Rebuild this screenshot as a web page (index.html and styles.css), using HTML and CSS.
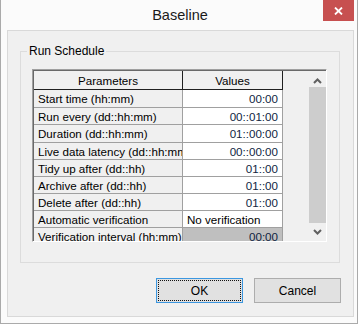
FILE: index.html
```html
<!DOCTYPE html>
<html lang="en">
<head>
    <meta charset="UTF-8">
    <title>Baseline</title>
    <link rel="stylesheet" href="styles.css">
</head>
<body>

    <div class="window">
        <!-- Title bar -->
        <div class="titlebar">
            <span></span>
            <span class="title">Baseline</span>
            <button class="close-btn" title="Close">
                <svg width="9" height="8" viewBox="0 0 9 8">
                    <path d="M1 0.5 L8 7.5 M8 0.5 L1 7.5" stroke="#fff" stroke-width="1.8" fill="none"/>
                </svg>
            </button>
        </div>

        <div class="panel">
            <div class="group">
                <span class="group-title">Run Schedule</span>

                <div class="grid">
                    <div class="table">
                        <div class="row head">
                            <div class="cell name">Parameters</div>
                            <div class="cell value">Values</div>
                        </div>
                        <div class="row">
                            <div class="cell name">Start time (hh:mm)</div>
                            <div class="cell value">00:00</div>
                        </div>
                        <div class="row">
                            <div class="cell name">Run every (dd::hh:mm)</div>
                            <div class="cell value">00::01:00</div>
                        </div>
                        <div class="row">
                            <div class="cell name">Duration (dd::hh:mm)</div>
                            <div class="cell value">01::00:00</div>
                        </div>
                        <div class="row">
                            <div class="cell name">Live data latency (dd::hh:mm)</div>
                            <div class="cell value">00::00:00</div>
                        </div>
                        <div class="row">
                            <div class="cell name">Tidy up after (dd::hh)</div>
                            <div class="cell value">01::00</div>
                        </div>
                        <div class="row">
                            <div class="cell name">Archive after (dd::hh)</div>
                            <div class="cell value">01::00</div>
                        </div>
                        <div class="row">
                            <div class="cell name">Delete after (dd::hh)</div>
                            <div class="cell value">01::00</div>
                        </div>
                        <div class="row">
                            <div class="cell name">Automatic verification</div>
                            <div class="cell value text">No verification</div>
                        </div>
                        <div class="row">
                            <div class="cell name">Verification interval (hh:mm)</div>
                            <div class="cell value disabled">00:00</div>
                        </div>
                    </div>

                    <!-- Vertical scrollbar -->
                    <div class="scrollbar">
                        <div class="arrow up">
                            <svg width="9" height="6" viewBox="0 0 9 6">
                                <path d="M1 5 L4.5 1.5 L8 5" stroke="#606060" stroke-width="2" fill="none"/>
                            </svg>
                        </div>
                        <div class="thumb"></div>
                        <div class="arrow down">
                            <svg width="9" height="6" viewBox="0 0 9 6">
                                <path d="M1 1 L4.5 4.5 L8 1" stroke="#606060" stroke-width="2" fill="none"/>
                            </svg>
                        </div>
                    </div>
                </div>
            </div>

            <div class="buttons">
                <button class="btn default">OK</button>
                <button class="btn">Cancel</button>
            </div>
        </div>
    </div>

</body>
</html>
```

FILE: styles.css
```css
/* General styling */
* {
    margin: 0;
    padding: 0;
    box-sizing: border-box;
    font-family: "Liberation Sans", Arial, sans-serif;
}

body {
    background-color: #ffffff;
}

.window {
    width: 358px;
    height: 324px;
    background-color: #fbfbfb;
    border: 1px solid #aaaaaa;
    border-top: none;
}

/* Title bar */
.titlebar {
    display: grid;
    grid-template-columns: 1fr auto 1fr;
    height: 30px;
}

.title {
    font-size: 14.5px;
    color: #1a1a1a;
    padding-top: 7px;
    padding-left: 2px;
}

.close-btn {
    justify-self: end;
    width: 31px;
    height: 21px;
    margin-right: 3px;
    background-color: #c75050;
    border: none;
    display: flex;
    justify-content: center;
    align-items: center;
}

/* Client area */
.panel {
    height: 287px;
    margin: 0 3px 0 6px;
    padding: 20px 13px 0 12px;
    background-color: #f0f0f0;
    border: 1px solid #d9d9d9;
}

.group {
    border: 1px solid #dcdcdc;
    padding: 0 12px 20px 11px;
}

.group-title {
    display: block;
    width: fit-content;
    margin: -8px 0 0 -5px;
    padding: 0 2px;
    font-size: 12px;
    line-height: 14px;
    color: #000;
    background-color: #f0f0f0;
}

/* Property grid */
.grid {
    display: flex;
    height: 173px;
    margin-top: 11px;
    overflow: hidden;
    background-color: #f0f0f0;
    border-style: solid;
    border-width: 1px;
    border-color: #a0a0a0 #ffffff #ffffff #a0a0a0;
    box-shadow: inset 1px 1px 0 #696969;
    padding: 1px 0 0 1px;
}

.table {
    width: 249px;
    font-size: 11.6px;
    color: #000;
}

.row {
    display: flex;
    height: 17px;
    border-bottom: 1px solid #a0a0a0;
}

.row:nth-child(2),
.row:nth-child(4) {
    height: 18px;
}

.row.head {
    height: 19px;
    border-bottom: 1px solid #202020;
}

.cell {
    display: flex;
    align-items: center;
    white-space: nowrap;
    overflow: hidden;
    border-right: 1px solid #a0a0a0;
}

.cell.name {
    width: 149px;
    padding-left: 4px;
    background-color: #f0f0f0;
}

.cell.value {
    width: 100px;
    justify-content: flex-end;
    padding-right: 4px;
    background-color: #ffffff;
    color: #0f1f3f;
}

.cell.value.text {
    justify-content: flex-start;
    padding-left: 4px;
    color: #000;
}

.cell.value.disabled {
    background-color: #bfbfbf;
}

.head .cell {
    justify-content: center;
    padding: 0;
    background-color: #f0f0f0;
    border-right: 1px solid #202020;
    color: #000;
}

/* Scrollbar */
.scrollbar {
    display: flex;
    flex-direction: column;
    width: 18px;
    margin-left: auto;
    padding-left: 1px;
    background-color: #f0f0f0;
}

.arrow {
    height: 16px;
    display: flex;
    justify-content: center;
    align-items: center;
}

.arrow.up {
    padding-top: 3px;
}

.arrow.down {
    height: 18px;
}

.thumb {
    height: 136px;
    background-color: #cdcdcd;
}

/* Dialog buttons */
.buttons {
    display: flex;
    justify-content: flex-end;
    gap: 11px;
    margin: 15px -1px 0 0;
}

.btn {
    width: 87px;
    height: 25px;
    font-size: 12px;
    color: #000;
    background-color: #e1e1e1;
    border: 1px solid #adadad;
}

.btn.default {
    border-color: #3c97e0;
    outline: 1px dotted #111;
    outline-offset: -3px;
}
```
